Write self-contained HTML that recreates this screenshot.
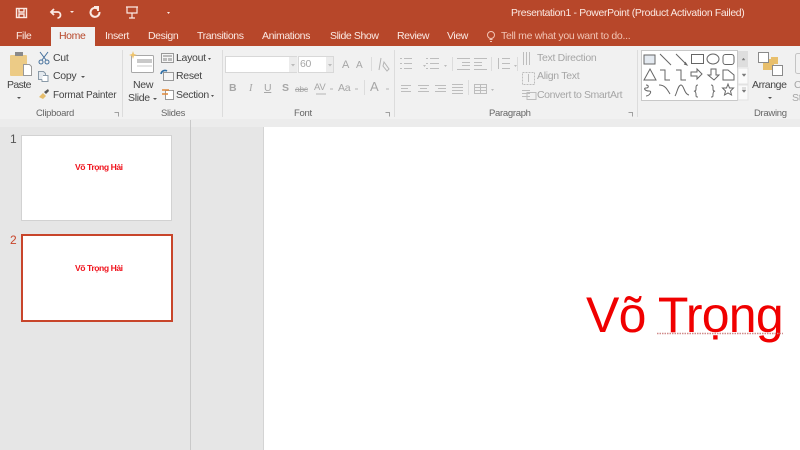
<!DOCTYPE html>
<html><head><meta charset="utf-8"><style>
html,body{margin:0;padding:0}
body{width:800px;height:450px;overflow:hidden;position:relative;background:#e6e6e6;font-family:"Liberation Sans",sans-serif}
#w{position:absolute;left:0;top:0;width:800px;height:450px;filter:blur(.35px)}
.t{position:absolute;white-space:nowrap;font-size:10.5px;line-height:13px;color:#444;letter-spacing:-.3px}
.g{color:#a6a6a6}
.tab{color:#fbe9e3;font-size:10.5px;letter-spacing:-.4px}
.b{position:absolute}
svg{position:absolute;left:0;top:0}
</style></head><body><div id="w">
<div class="b" style="left:0;top:0;width:800px;height:46px;background:#b7472a"></div>
<div class="b" style="left:0;top:46px;width:800px;height:73px;background:#f1f1f1"></div>
<div class="b" style="left:0;top:119px;width:800px;height:8px;background:#ececec"></div>
<div class="b" style="left:51px;top:27px;width:44px;height:20px;background:#f1f1f1"></div>
<div class="t" style="left:511px;top:7px;color:#fbe9e3;font-size:10.4px;letter-spacing:-.32px">Presentation1 - PowerPoint (Product Activation Failed)</div>
<div class="t tab" style="left:16px;top:30px">File</div>
<div class="t tab" style="left:59px;top:30px;color:#b7472a">Home</div>
<div class="t tab" style="left:105px;top:30px">Insert</div>
<div class="t tab" style="left:148px;top:30px">Design</div>
<div class="t tab" style="left:197px;top:30px">Transitions</div>
<div class="t tab" style="left:262px;top:30px">Animations</div>
<div class="t tab" style="left:330px;top:30px">Slide Show</div>
<div class="t tab" style="left:397px;top:30px">Review</div>
<div class="t tab" style="left:447px;top:30px">View</div>
<div class="t" style="left:501px;top:30px;color:#f2c4b4">Tell me what you want to do...</div>

<div class="t" style="left:7px;top:79px;letter-spacing:-.6px">Paste</div>
<div class="t" style="left:53px;top:52px">Cut</div>
<div class="t" style="left:53px;top:70px">Copy</div>
<div class="t" style="left:53px;top:89px;font-size:10px;letter-spacing:-.2px">Format Painter</div>
<div class="t" style="left:36px;top:107px;font-size:9.5px;color:#666">Clipboard</div>
<div class="t" style="left:133px;top:79px">New</div>
<div class="t" style="left:128px;top:92px">Slide</div>
<div class="t" style="left:176px;top:52px">Layout</div>
<div class="t" style="left:176px;top:70px">Reset</div>
<div class="t" style="left:176px;top:89px">Section</div>
<div class="t" style="left:161px;top:107px;font-size:9.5px;color:#666">Slides</div>
<div class="b" style="left:225px;top:56px;width:72px;height:17px;background:#fff;border:1px solid #d8d8d8;box-sizing:border-box"></div>
<div class="b" style="left:289px;top:57px;width:8px;height:15px;background:#ececec"></div>
<div class="b" style="left:298px;top:56px;width:36px;height:17px;background:#fff;border:1px solid #d8d8d8;box-sizing:border-box"></div>
<div class="b" style="left:326px;top:57px;width:7px;height:15px;background:#ececec"></div>
<div class="t g" style="left:300px;top:58px">60</div>
<div class="t g" style="left:229px;top:82px;font-weight:bold">B</div>
<div class="t g" style="left:249px;top:82px;font-style:italic;font-family:'Liberation Serif',serif">I</div>
<div class="t g" style="left:264px;top:82px;text-decoration:underline">U</div>
<div class="t g" style="left:282px;top:82px;font-weight:bold">S</div>
<div class="t g" style="left:295px;top:83px;font-size:8.5px;text-decoration:line-through">abc</div>
<div class="t g" style="left:314px;top:81px;font-size:9.5px">AV</div>
<div class="t g" style="left:338px;top:82px">Aa</div>
<div class="t g" style="left:370px;top:80px;font-size:13px">A</div>
<div class="t g" style="left:342px;top:59px;font-size:11px">A</div>
<div class="t g" style="left:356px;top:59px;font-size:10px">A</div>
<div class="t" style="left:294px;top:107px;font-size:9.5px;color:#666">Font</div>
<div class="t g" style="left:537px;top:52px">Text Direction</div>
<div class="t g" style="left:537px;top:70px">Align Text</div>
<div class="t g" style="left:537px;top:89px;letter-spacing:-.4px">Convert to SmartArt</div>
<div class="t" style="left:489px;top:107px;font-size:9.5px;color:#666">Paragraph</div>
<div class="t" style="left:752px;top:79px;letter-spacing:-.4px">Arrange</div>
<div class="t" style="left:754px;top:107px;font-size:9.5px;color:#666">Drawing</div>
<div class="t g" style="left:794px;top:79px">C</div>
<div class="t g" style="left:792px;top:92px">St</div>

<svg width="800" height="450" viewBox="0 0 800 450" fill="none">
<!-- QAT -->
<g stroke="#fbe9e3" stroke-width="1.4">
<rect x="16.500" y="8.500" width="10" height="9"/><path d="M19 9v3h5V9M19 17v-3h5v3"/>
<path d="M54 9l-3 3 3 3M51.500 12h6c4 0 4 6 0 6" stroke-width="1.800"/>
<path d="M98 9a4.500 4.500 0 1 0 1.500 3M94 7h4v4" stroke-width="2"/>
<path d="M126 7h12M127 7v6h10V7M132 13v5M129 18h6" stroke-width="1.200"/>
</g>
<path d="M70 11h4l-2 2zM167 12h3l-1.500 2z" fill="#fbe9e3"/>
<circle cx="491" cy="35" r="3.500" stroke="#f2c4b4"/><path d="M489.500 39.500h3M490 41.500h2" stroke="#f2c4b4"/>
<!-- Paste -->
<rect x="10" y="55" width="17" height="21" rx="1" fill="#eccb86"/>
<rect x="15" y="52" width="8" height="4" fill="#8a8a8a"/>
<path d="M23.500 64.500h6l2 2v9h-8z" fill="#fff" stroke="#9a9a9a"/>
<path d="M17 97h4l-2 2z" fill="#555"/>
<!-- cut/copy/painter -->
<g stroke="#44709c" stroke-width="1">
<circle cx="41" cy="62" r="2"/><circle cx="47" cy="62" r="2"/><path d="M42 60l6-8M46 60l-6-8"/>
<path d="M38.500 71.500h5l2 2v6h-7z" fill="#e4e9ee" stroke="#8a9aa8"/><path d="M43 75.500h5v6h-6v-2" fill="#fff" stroke="#8a9aa8"/>
</g>
<path d="M39 97l4-4 3 3-3 3z" fill="#e6bd6c"/><path d="M44 92l4-3 1 2-3 3z" fill="#555"/>
<path d="M81 76h4l-2 2z" fill="#555"/>
<!-- separators -->
<g stroke="#dcdcdc">
<path d="M122.500 50v67M222.500 50v67M394.500 50v67M637.500 50v67"/>
<path d="M371.500 57v14M364.500 80v15M452.500 57v14M491.500 57v14M517.500 57v14M468.500 80v15"/>
</g>
<!-- New slide -->
<rect x="131.500" y="55.500" width="22" height="17" rx="1" fill="#fff" stroke="#a8a8a8"/>
<rect x="137" y="59" width="15" height="4" fill="#c9c9c9"/><path d="M137 66h15" stroke="#c9c9c9"/>
<path d="M133 51l1 3 3 1-3 1-1 3-1-3-3-1 3-1z" fill="#efc46c"/>
<path d="M153 98h4l-2 2z" fill="#555"/>
<!-- Layout / reset / section -->
<rect x="161.500" y="53.500" width="12" height="9" fill="#f5f5f5" stroke="#999"/><rect x="163" y="55" width="9" height="2" fill="#bbb"/><rect x="163" y="58" width="4" height="3" fill="#bbb"/><rect x="168" y="58" width="4" height="3" fill="#bbb"/>
<rect x="163.500" y="72.500" width="10" height="8" fill="#f5f5f5" stroke="#999"/><path d="M161 74a4 4 0 0 1 6-3" stroke="#2f6ea5" stroke-width="1.600"/>
<rect x="165.500" y="90.500" width="8" height="9" fill="#fff" stroke="#999"/><path d="M162 90h7M162 94h6" stroke="#e0893a" stroke-width="1.500"/>
<path d="M208 58h3l-1.500 2zM211 95h3l-1.500 2z" fill="#555"/>
<!-- font icons -->
<path d="M291 64h4l-2 2.500zM328 64h4l-2 2.500z" fill="#bbb"/>
<path d="M381 58l-2 12M384 62l5 7-2 2-4-5z" stroke="#b5b5b5"/>
<path d="M316 94h10" stroke="#b5b5b5"/>
<path d="M330 89h3M355 89h3M386 89h3" stroke="#b5b5b5"/>
<!-- paragraph icons -->
<g stroke="#bdbdbd">
<path d="M404 58.500h8M404 63.500h8M404 68.500h8M400 58.500h2M400 63.500h2M400 68.500h2"/>
<path d="M430 58.500h9M430 63.500h9M430 68.500h9M426 58.500h2M426 63.500h2M426 68.500h2"/>
<path d="M457 58.500h13M462 62.500h8M462 65.500h8M457 69.500h13M474 58.500h13M474 62.500h8M474 65.500h8M474 69.500h13"/>
<path d="M502 58.500h8M502 63.500h8M502 68.500h8M498.500 58v11"/>
<path d="M401 85.500h10M401 88.500h7M401 91.500h10M418 85.500h11M420 88.500h7M418 91.500h11M435 85.500h11M438 88.500h8M435 91.500h11"/>
<path d="M452 84.500h11M452 87.500h11M452 90.500h11M452 93.500h11"/>
<rect x="474.500" y="84.500" width="12" height="9"/><path d="M474 87.500h12M474 90.500h12M480.500 84v9"/>
<path d="M523.500 52v13M526.500 52v13M529.500 52v13"/>
<path d="M522 90.500h8M522 93.500h8M522 96.500h8M527 92.500h9v7h-9z"/>
<rect x="522.500" y="72.500" width="12" height="12" stroke-dasharray="2 1"/><path d="M528.500 74v8"/>
</g>
<path d="M423 65h3l-1.500 2zM444 65h3l-1.500 2zM514 65h3l-1.500 2zM491 89h3l-1.500 2z" fill="#bbb"/>
<!-- dialog launchers -->
<path d="M114.500 112.500h4v4M385.500 112.500h4v4M628.500 112.500h4v4" stroke="#a0a0a0"/>
<!-- shapes gallery -->
<rect x="641.500" y="50.500" width="96" height="50" fill="#fff" stroke="#c8c8c8"/>
<rect x="738" y="51" width="10" height="16" fill="#dedede"/>
<rect x="738" y="68" width="10" height="16" fill="#fafafa" stroke="#e2e2e2"/>
<rect x="738" y="85" width="10" height="15" fill="#fafafa" stroke="#e2e2e2"/>
<path d="M742 60h3l-1.500-2zM742 74h4l-2 2.500zM742 90h4l-2 2.500zM742 88h4" fill="#777" stroke="#888" stroke-width=".5"/>
<g stroke="#666">
<rect x="644" y="55" width="11" height="9" fill="#e4eaf1"/>
<path d="M660 54l11 11M676 54l11 11M685 62l2 3-3-1"/>
<rect x="691.500" y="54.500" width="12" height="9"/>
<ellipse cx="713" cy="59" rx="6" ry="5"/>
<rect x="723" y="54.500" width="11" height="10" rx="2.500"/>
<path d="M650 69l6 11h-12zM660 70h5v10h5M676 70h5v10h5"/>
<path d="M691 72h6v-3l5 5-5 5v-3h-6zM711 69h5v6h3l-5 5-6-5h3z"/>
<path d="M723 70h5l6 5v5h-11z"/>
<path d="M646 85c3 0 3 3 0 3s-1 3 3 3 0 5-3 5"/>
<path d="M659 85c6 0 8 4 11 9M675 96c2-3 3-11 6-11s3 9 8 10"/>
<path d="M698 85c-2 0-2 1-2 4s-2 2-2 2 2 0 2 3 0 3 2 3M711 85c2 0 2 1 2 4s2 2 2 2-2 0-2 3 0 3-2 3"/>
<path d="M728 84l1.500 4h4l-3 3 1 4-3.500-2-3.500 2 1-4-3-3h4z"/>
</g>
<!-- Arrange -->
<rect x="763" y="59" width="11" height="11" fill="#e8bf6c"/>
<rect x="771" y="57" width="7" height="7" fill="#e8bf6c"/>
<rect x="758.500" y="52.500" width="10" height="10" fill="#fff" stroke="#8a8a8a"/>
<rect x="772.500" y="65.500" width="10" height="10" fill="#fff" stroke="#8a8a8a"/>
<path d="M768 97h4l-2 2z" fill="#555"/>
<rect x="795.500" y="53.500" width="8" height="20" rx="2" stroke="#c4c4c4"/>
</svg>

<!-- panels -->
<div class="b" style="left:190px;top:120px;width:1px;height:330px;background:#c9c9c9"></div>
<div class="b" style="left:264px;top:127px;width:536px;height:323px;background:#fff;box-shadow:-1px 0 0 #d4d4d4"></div>
<div class="t" style="left:10px;top:133px;font-size:12px;color:#555">1</div>
<div class="t" style="left:10px;top:234px;font-size:12px;color:#c8452b">2</div>
<div class="b" style="left:21px;top:135px;width:151px;height:86px;background:#fff;border:1px solid #d2d2d2;box-sizing:border-box"></div>
<div class="b" style="left:20.500px;top:234px;width:152px;height:88px;background:#fff;border:2px solid #c8452b;box-sizing:border-box"></div>
<div class="t" style="left:75px;top:161px;font-size:8.6px;color:#f0141e;font-weight:bold;letter-spacing:-.45px">Võ Trọng Hải</div>
<div class="t" style="left:75px;top:262px;font-size:8.6px;color:#f0141e;font-weight:bold;letter-spacing:-.45px">Võ Trọng Hải</div>
<div class="t" style="left:586px;top:282px;font-size:50px;line-height:66px;color:#f00000;letter-spacing:-.75px">Võ Trọng</div>
<svg width="800" height="450" viewBox="0 0 800 450" fill="none"><path d="M657 333.500h126" stroke="#d08a8a" stroke-width="1.500" stroke-dasharray="1.500 1"/></svg>
</div></body></html>
